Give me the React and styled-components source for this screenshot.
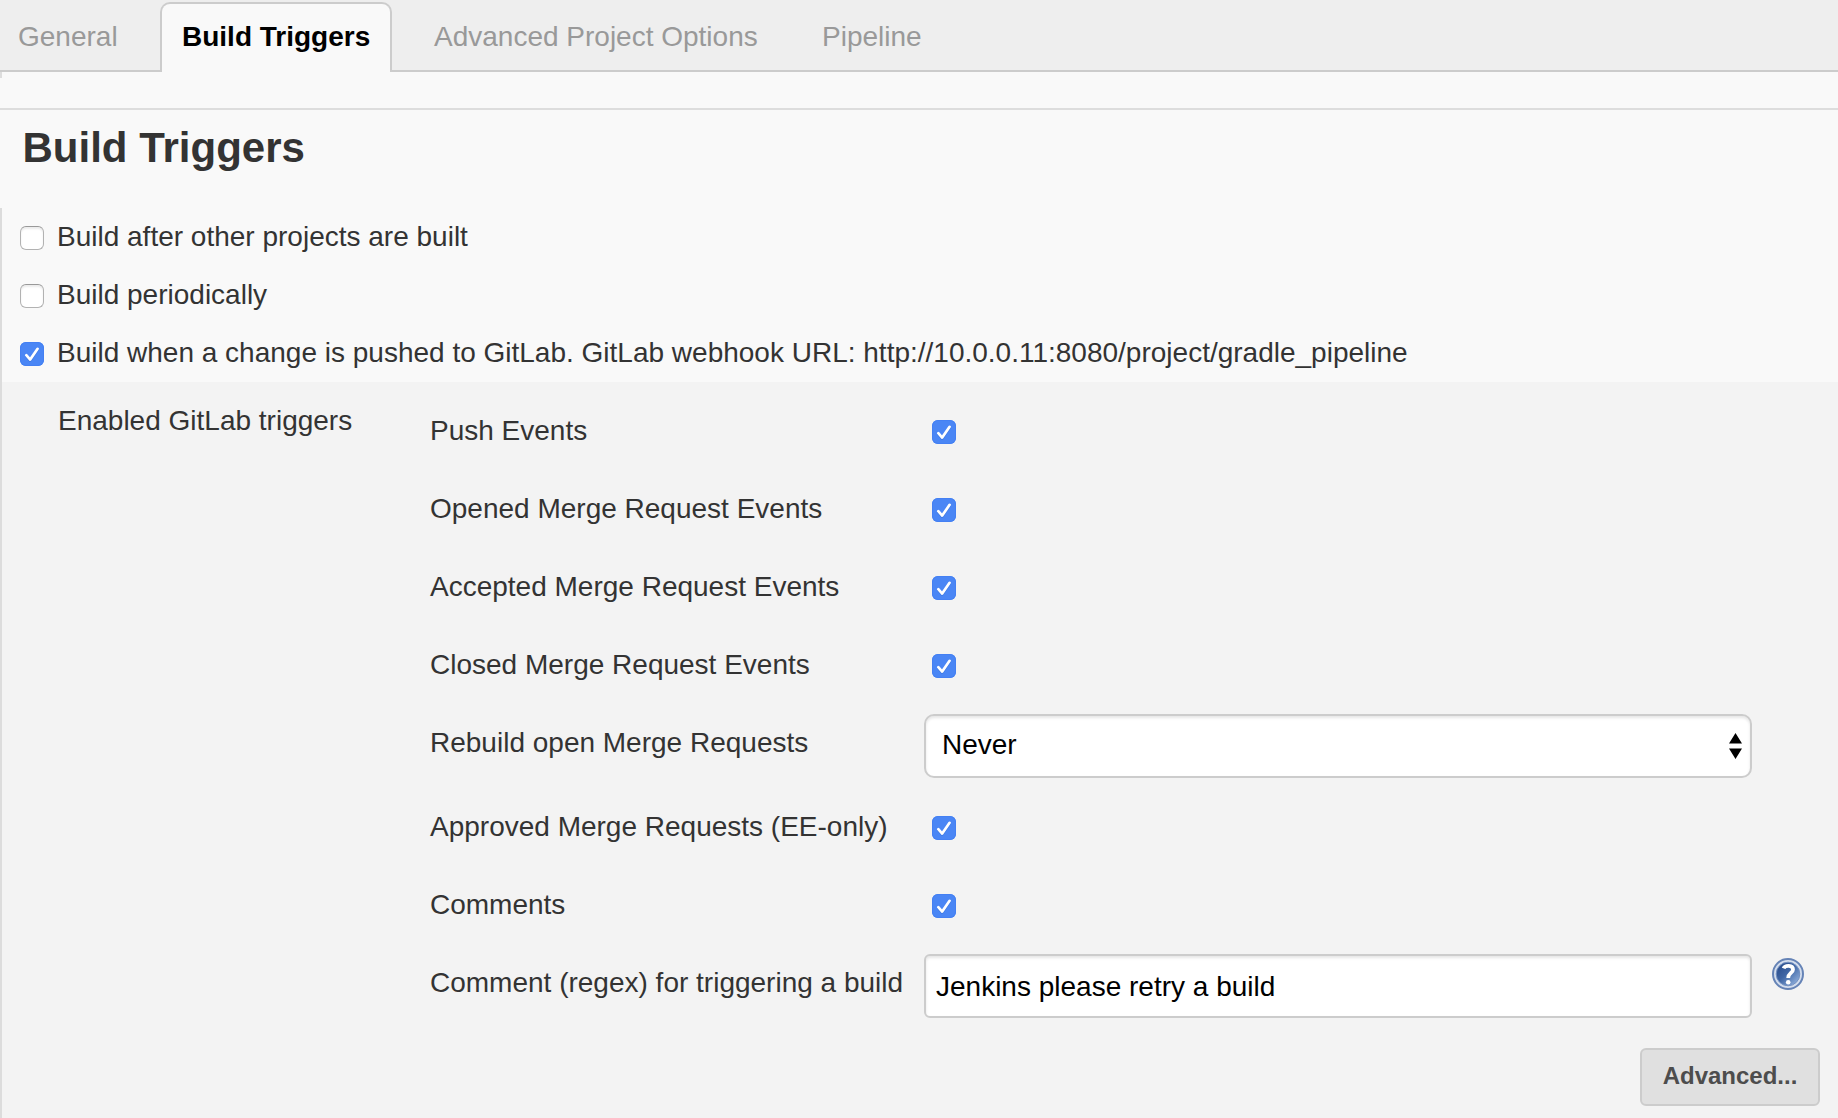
import React from "react";
import styled, { createGlobalStyle, css } from "styled-components";

const GlobalStyle = createGlobalStyle`
  * { box-sizing: border-box; }
  body {
    margin: 0;
    background: #f9f9f9;
    color: #333;
    font: 28px/32px "Liberation Sans", Helvetica, Arial, sans-serif;
    overflow: hidden;
  }
`;

const Page = styled.div`
  display: flex;
  flex-direction: column;
  height: 1118px;
  overflow: hidden;
`;

const TabBar = styled.nav`
  display: flex;
  height: 72px;
  padding-top: 2px;
  background: linear-gradient(#ccc, #ccc) bottom / 100% 2px no-repeat #eee;
`;

const Tab = styled.button`
  height: 70px;
  padding: 4px 0 4px;
  border: 0;
  background: none;
  color: #999;
  font: inherit;
  text-align: left;
  white-space: nowrap;
  width: ${(p) => p.$width}px;
  padding-left: ${(p) => p.$inset}px;
  ${(p) =>
    p.$active &&
    css`
      border: 2px solid #ccc;
      border-bottom: 0;
      border-radius: 10px 10px 0 0;
      padding-top: 2px;
      padding-bottom: 4px;
      background: #f9f9f9;
      color: #000;
      font-weight: bold;
    `}
`;

const Stub = styled.div`
  width: 2px;
  height: 6px;
  background: #ddd;
`;

const SectionHeader = styled.header`
  margin-top: 30px;
  height: 100px;
  border-top: 2px solid #ddd;
  padding: 14px 0 0 22.5px;
`;

const Heading = styled.h1`
  margin: 0;
  font-size: 42px;
  line-height: 48px;
`;

const Form = styled.form`
  flex: 1;
  display: flex;
  flex-direction: column;
  border-left: 2px solid #dcdcdc;
`;

const OptionList = styled.div`
  height: 174px;
  padding: 12px 0 0 18px;
`;

const Option = styled.label`
  display: flex;
  gap: 13px;
  height: 58px;
`;

const OptionText = styled.span`
  padding-top: 1px;
  white-space: nowrap;
`;

const CheckBoxFrame = styled.span`
  flex: none;
  display: block;
  width: 24px;
  height: 24px;
  margin-top: 6px;
  border-radius: 6px;
  ${(p) =>
    p.$checked
      ? css`
          background: #4a86f5;
          box-shadow: inset 0 0 0 1px #4480f3;
        `
      : css`
          background: #fff;
          border: 1px solid #b2b2b2;
          border-top-color: #999;
          box-shadow: inset 0 2px 2px #ececec;
        `}
  svg { display: block; }
`;

function CheckBox({ checked }) {
  return (
    <CheckBoxFrame $checked={checked}>
      {checked && (
        <svg width="24" height="24" viewBox="0 0 24 24" fill="none" strokeLinecap="round" strokeLinejoin="round" strokeWidth="2.7">
          <path d="M6.3 14.2 10.2 18.6 17.6 7.8" stroke="#2864c8" strokeOpacity=".4" />
          <path d="M6.3 13.2 10.2 17.6 17.6 6.8" stroke="#fff" />
        </svg>
      )}
    </CheckBoxFrame>
  );
}

const Panel = styled.section`
  flex: 1;
  display: grid;
  grid-template-columns: 372px 1fr;
  padding: 18px 18px 0 56px;
  background: #f3f3f3;
`;

const PanelTitle = styled.div`
  padding-top: 5px;
`;

const Rows = styled.div`
  display: flex;
  flex-direction: column;
`;

const Row = styled.div`
  display: grid;
  grid-template-columns: 494px 828px 52px;
  height: ${(p) => p.$height || 78}px;
`;

const Label = styled.div`
  padding-top: 15px;
  white-space: nowrap;
`;

const CheckCell = styled.div`
  padding: 14px 0 0 8px;
`;

const fieldFrame = css`
  height: 64px;
  margin-top: 2px;
  border: 2px solid #ccc;
  background: #fff;
  box-shadow: inset 0 2px 3px rgba(0, 0, 0, 0.1);
  color: #000;
  font: inherit;
`;

const Select = styled.div`
  ${fieldFrame}
  display: flex;
  justify-content: space-between;
  border-radius: 10px;
  padding: 13px 8px 0 16px;
`;

const Arrows = styled.svg`
  display: block;
  width: 13px;
  height: 26px;
  margin-top: 4px;
`;

const Input = styled.input`
  ${fieldFrame}
  width: 828px;
  border-radius: 6px;
  padding: 2px 10px 0;
  outline: 0;
`;

const HelpIcon = styled.svg`
  width: 32px;
  height: 32px;
  margin: 6px 0 0 20px;
`;

function Help() {
  return (
    <HelpIcon viewBox="0 0 32 32">
      <defs>
        <linearGradient id="disc" x1="0.1" y1="0.1" x2="0.9" y2="0.9">
          <stop offset="0" stopColor="#2a4d8c" />
          <stop offset=".45" stopColor="#3f66a5" />
          <stop offset="1" stopColor="#8fafdc" />
        </linearGradient>
      </defs>
      <circle cx="16" cy="16" r="15" fill="#d3dded" stroke="#6583b6" strokeWidth="2" />
      <circle cx="16" cy="16" r="11.8" fill="url(#disc)" stroke="#7390c0" strokeWidth="1" />
      <path d="M11.6 10.4C13 7 21 6.6 21 11.4 21 15 16.2 15 16.2 20" fill="none" stroke="#fff" strokeWidth="3.8" />
      <circle cx="16.2" cy="24.2" r="2.3" fill="#fff" />
    </HelpIcon>
  );
}

const Advanced = styled.button`
  align-self: flex-end;
  width: 180px;
  height: 58px;
  padding: 0 0 2px;
  border: 2px solid #ccc;
  border-radius: 6px;
  background: #e0e0e0;
  color: #4d4d4d;
  font: bold 24px/28px "Liberation Sans", Helvetica, Arial, sans-serif;
`;

const options = [
  { label: "Build after other projects are built" },
  { label: "Build periodically" },
  {
    label:
      "Build when a change is pushed to GitLab. GitLab webhook URL: http://10.0.0.11:8080/project/gradle_pipeline",
    checked: true,
  },
];

const triggers = [
  { label: "Push Events" },
  { label: "Opened Merge Request Events" },
  { label: "Accepted Merge Request Events" },
  { label: "Closed Merge Request Events" },
  { label: "Rebuild open Merge Requests", kind: "select", height: 84 },
  { label: "Approved Merge Requests (EE-only)" },
  { label: "Comments" },
  { label: "Comment (regex) for triggering a build", kind: "input", height: 96 },
];

function Control({ kind }) {
  if (kind === "select")
    return (
      <Select>
        <span>Never</span>
        <Arrows viewBox="0 0 13 26">
          <path d="M6.5 0 13 10.5H0zM0 15.5H13L6.5 26z" />
        </Arrows>
      </Select>
    );
  if (kind === "input") return <Input defaultValue="Jenkins please retry a build" />;
  return (
    <CheckCell>
      <CheckBox checked />
    </CheckCell>
  );
}

export default function App() {
  return (
    <Page>
      <GlobalStyle />
      <TabBar>
        <Tab $width={160} $inset={18}>General</Tab>
        <Tab $width={232} $inset={20} $active>Build Triggers</Tab>
        <Tab $width={400} $inset={42}>Advanced Project Options</Tab>
        <Tab $width={200} $inset={30}>Pipeline</Tab>
      </TabBar>
      <Stub />
      <SectionHeader>
        <Heading>Build Triggers</Heading>
      </SectionHeader>
      <Form>
        <OptionList>
          {options.map((o) => (
            <Option key={o.label}>
              <CheckBox checked={o.checked} />
              <OptionText>{o.label}</OptionText>
            </Option>
          ))}
        </OptionList>
        <Panel>
          <PanelTitle>Enabled GitLab triggers</PanelTitle>
          <Rows>
            {triggers.map((t) => (
              <Row key={t.label} $height={t.height}>
                <Label>{t.label}</Label>
                <Control kind={t.kind} />
                {t.kind === "input" && <Help />}
              </Row>
            ))}
            <Advanced type="button">Advanced...</Advanced>
          </Rows>
        </Panel>
      </Form>
    </Page>
  );
}
